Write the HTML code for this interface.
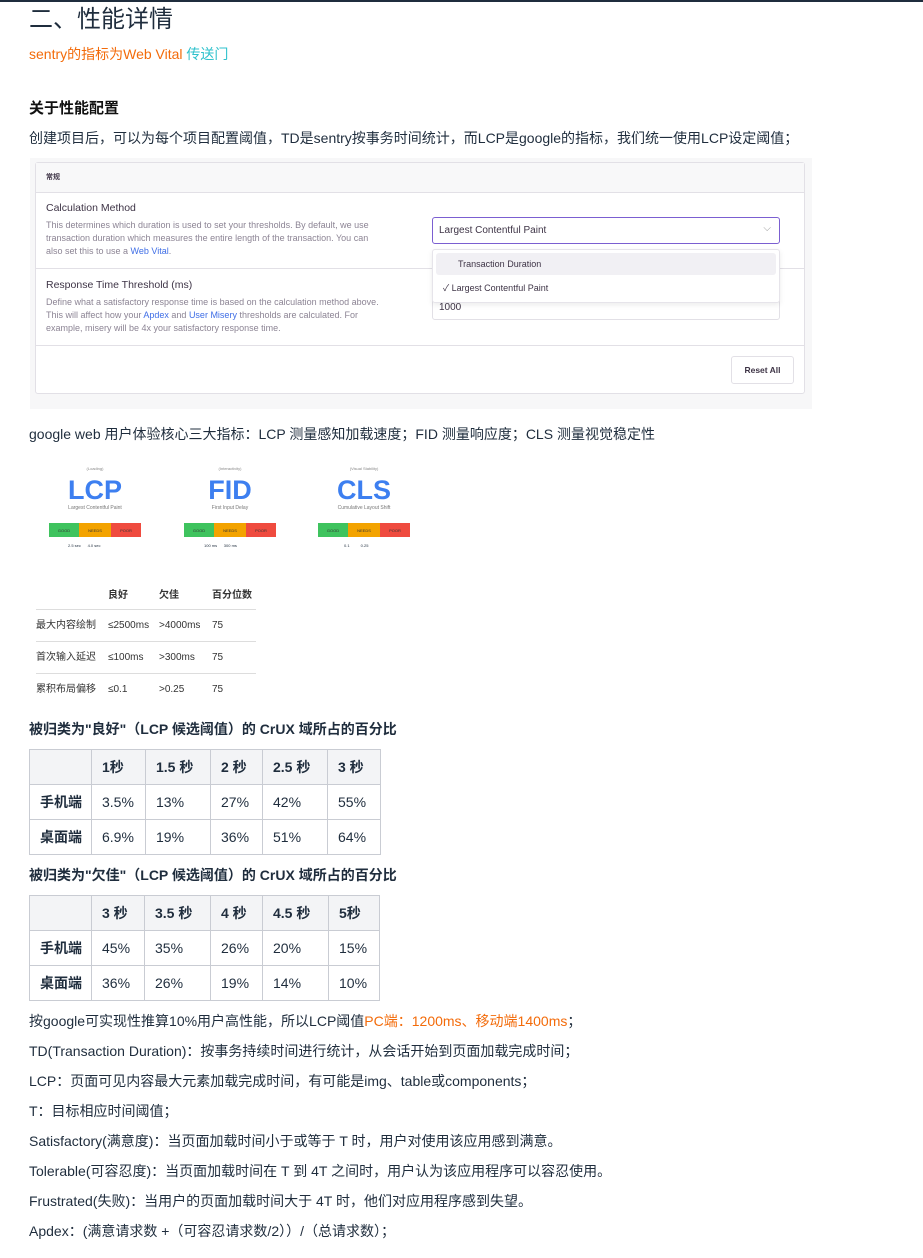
<!DOCTYPE html>
<html><head><meta charset="utf-8"><style>
*{margin:0;padding:0;box-sizing:border-box}
body{width:923px;height:1258px;background:#fff;font-family:"Liberation Sans","Noto Sans CJK SC",sans-serif;color:#1f2d3d;position:relative;overflow:hidden}
.a{position:absolute;white-space:nowrap}
.t{font-size:14px;line-height:20px}
.o{color:#f36b0a}
.c{color:#2ec1cc}
table{position:absolute;border-collapse:collapse;font-size:14px;table-layout:fixed}
td{border:1px solid #c9ccd3;padding:0 0 0 10px;height:35px;white-space:nowrap;overflow:hidden}
tr:first-child td{background:#f3f4f6;font-weight:bold}
td:first-child{font-weight:bold}
.card{position:absolute;left:35px;top:162px;width:770px;height:232px;background:#fff;border:1px solid #e2e0e6;border-radius:3px;font-size:10px;color:#3e3446}
.g{color:#8c8494;font-size:9px;line-height:13px}
.l{color:#3f6ee6}
.bar{position:absolute;height:14px;font-size:4px;display:flex}
.bar div{display:flex;align-items:center;justify-content:center;color:#333}
.st{position:absolute;left:36px;top:586px;font-size:10px;color:#333;width:220px}
.st div{position:relative}
.st span{position:absolute}
</style></head><body>
<div class="a" style="left:0;top:0;width:923px;height:2px;background:#1f2d3d"></div>
<div class="a" style="left:29px;top:4px;font-size:24px;line-height:32px">二、性能详情</div>
<div class="a t o" style="left:29px;top:44px">sentry的指标为Web Vital <span class="c">传送门</span></div>
<div class="a" style="left:29px;top:97px;font-size:15px;font-weight:bold;color:#111">关于性能配置</div>
<div class="a t" style="left:29px;top:128px">创建项目后，可以为每个项目配置阈值，TD是sentry按事务时间统计，而LCP是google的指标，我们统一使用LCP设定阈值；</div>

<div class="a" style="left:30px;top:158px;width:782px;height:251px;background:#f7f7f8"></div>
<div class="card">
 <div style="height:30px;background:#f8f8f9;border-bottom:1px solid #e2e0e6;padding:9px 10px;font-size:7px;font-weight:bold">常规</div>
 <div class="a" style="left:10px;top:39px;font-size:10.5px">Calculation Method</div>
 <div class="a g" style="left:10px;top:56px">This determines which duration is used to set your thresholds. By default, we use<br>transaction duration which measures the entire length of the transaction. You can<br>also set this to use a <span class="l">Web Vital</span>.</div>
 <div class="a" style="left:0;top:105px;width:768px;border-top:1px solid #e2e0e6"></div>
 <div class="a" style="left:10px;top:116px;font-size:10.5px">Response Time Threshold (ms)</div>
 <div class="a g" style="left:10px;top:133px">Define what a satisfactory response time is based on the calculation method above.<br>This will affect how your <span class="l">Apdex</span> and <span class="l">User Misery</span> thresholds are calculated. For<br>example, misery will be 4x your satisfactory response time.</div>
 <div class="a" style="left:0;top:182px;width:768px;border-top:1px solid #e2e0e6"></div>
 <div class="a" style="left:396px;top:54px;width:348px;height:27px;border:1px solid #7b5fd1;border-radius:3px;padding:7px 6px;font-size:10px">Largest Contentful Paint<span style="position:absolute;right:8px;top:5px;color:#999">⌵</span></div>
 <div class="a" style="left:396px;top:130px;width:348px;height:27px;border:1px solid #e2e0e6;border-radius:3px;padding:8px 6px;font-size:10px">1000</div>
 <div class="a" style="left:396px;top:86px;width:348px;height:54px;background:#fff;border:1px solid #e6e4ea;border-radius:3px;box-shadow:0 2px 6px rgba(0,0,0,.08);font-size:9px">
  <div style="margin:3px;height:22px;background:#f1f0f4;border-radius:3px;padding:6px 22px">Transaction Duration</div>
  <div style="padding:3px 10px">✓ Largest Contentful Paint</div>
 </div>
 <div class="a" style="left:695px;top:193px;width:63px;height:28px;border:1px solid #e2e0e6;border-radius:3px;font-size:8.5px;font-weight:bold;text-align:center;line-height:26px">Reset All</div>
</div>

<div class="a t" style="left:29px;top:424px">google web 用户体验核心三大指标：LCP 测量感知加载速度；FID 测量响应度；CLS 测量视觉稳定性</div>

<div class="a" style="left:49px;top:466px;width:92px;text-align:center;font-size:4px;color:#888">(Loading)</div>
<div class="a" style="left:49px;top:475px;width:92px;text-align:center;font-size:27px;font-weight:bold;color:#3d7ff0;line-height:30px">LCP</div>
<div class="a" style="left:49px;top:505px;width:92px;text-align:center;font-size:5px;color:#777">Largest Contentful Paint</div>
<div class="bar" style="left:49px;top:523px;width:92px"><div style="width:30px;background:#3fc35e">GOOD</div><div style="width:32px;background:#f3a300">NEEDS</div><div style="width:30px;background:#ef4b3f">POOR</div></div>
<div class="a" style="left:68px;top:543px;font-size:4px">2.5 sec &nbsp;&nbsp;&nbsp;&nbsp;&nbsp;4.0 sec</div>

<div class="a" style="left:184px;top:466px;width:92px;text-align:center;font-size:4px;color:#888">(Interactivity)</div>
<div class="a" style="left:184px;top:475px;width:92px;text-align:center;font-size:27px;font-weight:bold;color:#3d7ff0;line-height:30px">FID</div>
<div class="a" style="left:184px;top:505px;width:92px;text-align:center;font-size:5px;color:#777">First Input Delay</div>
<div class="bar" style="left:184px;top:523px;width:92px"><div style="width:30px;background:#3fc35e">GOOD</div><div style="width:32px;background:#f3a300">NEEDS</div><div style="width:30px;background:#ef4b3f">POOR</div></div>
<div class="a" style="left:204px;top:543px;font-size:4px">100 ms &nbsp;&nbsp;&nbsp;&nbsp;&nbsp;300 ms</div>

<div class="a" style="left:318px;top:466px;width:92px;text-align:center;font-size:4px;color:#888">(Visual Stability)</div>
<div class="a" style="left:318px;top:475px;width:92px;text-align:center;font-size:27px;font-weight:bold;color:#3d7ff0;line-height:30px">CLS</div>
<div class="a" style="left:318px;top:505px;width:92px;text-align:center;font-size:5px;color:#777">Cumulative Layout Shift</div>
<div class="bar" style="left:318px;top:523px;width:92px"><div style="width:30px;background:#3fc35e">GOOD</div><div style="width:32px;background:#f3a300">NEEDS</div><div style="width:30px;background:#ef4b3f">POOR</div></div>
<div class="a" style="left:344px;top:543px;font-size:4px">0.1 &nbsp;&nbsp;&nbsp;&nbsp;&nbsp;&nbsp;&nbsp;&nbsp;&nbsp;0.25</div>

<div class="st">
 <div style="height:23px;font-weight:bold"><span style="left:72px">良好</span><span style="left:123px">欠佳</span><span style="left:176px">百分位数</span></div>
 <div style="border-top:1px solid #ddd;height:32px;line-height:32px">最大内容绘制<span style="left:72px">≤2500ms</span><span style="left:123px">&gt;4000ms</span><span style="left:176px">75</span></div>
 <div style="border-top:1px solid #ddd;height:32px;line-height:32px">首次输入延迟<span style="left:72px">≤100ms</span><span style="left:123px">&gt;300ms</span><span style="left:176px">75</span></div>
 <div style="border-top:1px solid #ddd;height:32px;line-height:32px">累积布局偏移<span style="left:72px">≤0.1</span><span style="left:123px">&gt;0.25</span><span style="left:176px">75</span></div>
</div>

<div class="a t" style="left:29px;top:719px;font-weight:bold">被归类为"良好"（LCP 候选阈值）的 CrUX 域所占的百分比</div>
<table style="left:29px;top:749px;width:351px">
<colgroup><col style="width:62px"><col style="width:54px"><col style="width:65px"><col style="width:52px"><col style="width:65px"><col style="width:53px"></colgroup>
<tr><td></td><td>1秒</td><td>1.5 秒</td><td>2 秒</td><td>2.5 秒</td><td>3 秒</td></tr>
<tr><td>手机端</td><td>3.5%</td><td>13%</td><td>27%</td><td>42%</td><td>55%</td></tr>
<tr><td>桌面端</td><td>6.9%</td><td>19%</td><td>36%</td><td>51%</td><td>64%</td></tr>
</table>
<div class="a t" style="left:29px;top:865px;font-weight:bold">被归类为"欠佳"（LCP 候选阈值）的 CrUX 域所占的百分比</div>
<table style="left:29px;top:895px;width:350px">
<colgroup><col style="width:62px"><col style="width:53px"><col style="width:66px"><col style="width:52px"><col style="width:66px"><col style="width:51px"></colgroup>
<tr><td></td><td>3 秒</td><td>3.5 秒</td><td>4 秒</td><td>4.5 秒</td><td>5秒</td></tr>
<tr><td>手机端</td><td>45%</td><td>35%</td><td>26%</td><td>20%</td><td>15%</td></tr>
<tr><td>桌面端</td><td>36%</td><td>26%</td><td>19%</td><td>14%</td><td>10%</td></tr>
</table>

<div class="a t" style="left:29px;top:1011px">按google可实现性推算10%用户高性能，所以LCP阈值<span class="o">PC端：1200ms、移动端1400ms</span>；</div>
<div class="a t" style="left:29px;top:1041px">TD(Transaction Duration)：按事务持续时间进行统计，从会话开始到页面加载完成时间；</div>
<div class="a t" style="left:29px;top:1071px">LCP：页面可见内容最大元素加载完成时间，有可能是img、table或components；</div>
<div class="a t" style="left:29px;top:1101px">T：目标相应时间阈值；</div>
<div class="a t" style="left:29px;top:1131px">Satisfactory(满意度)：当页面加载时间小于或等于 T 时，用户对使用该应用感到满意。</div>
<div class="a t" style="left:29px;top:1161px">Tolerable(可容忍度)：当页面加载时间在 T 到 4T 之间时，用户认为该应用程序可以容忍使用。</div>
<div class="a t" style="left:29px;top:1191px">Frustrated(失败)：当用户的页面加载时间大于 4T 时，他们对应用程序感到失望。</div>
<div class="a t" style="left:29px;top:1221px">Apdex：(满意请求数 +（可容忍请求数/2））/（总请求数）；</div>
</body></html>
